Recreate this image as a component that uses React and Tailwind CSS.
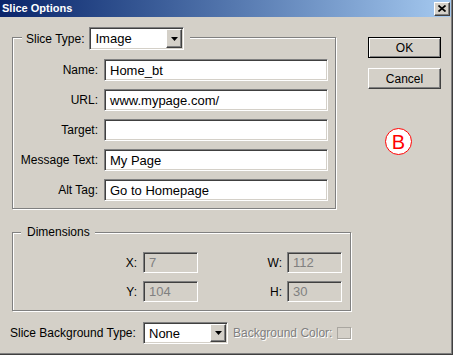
import React from "react";

const sunken =
  "border border-t-[#808080] border-l-[#808080] border-b-white border-r-white shadow-[inset_1px_1px_0_#404040,inset_-1px_-1px_0_#d4d0c8]";
const raised =
  "border border-t-white border-l-white border-b-[#404040] border-r-[#404040] shadow-[inset_-1px_-1px_0_#808080]";
const etched =
  "border border-[#808080] shadow-[inset_1px_1px_0_#fff,1px_1px_0_#fff]";

function Field({ value, disabled, className }) {
  return (
    <div
      className={`${sunken} ${className} flex items-center pl-[5px] text-[13px] leading-none ${
        disabled ? "bg-[#d4d0c8] text-[#808080]" : "bg-white text-black"
      }`}
    >
      {value}
    </div>
  );
}

function Select({ value, className }) {
  return (
    <div className={`${sunken} ${className} bg-white flex items-stretch p-[1px]`}>
      <div className="flex-1 flex items-center pl-[4px] text-[13px] leading-none text-black">
        {value}
      </div>
      <div className={`${raised} w-[16px] bg-[#d4d0c8] flex items-center justify-center`}>
        <svg width="7" height="4" viewBox="0 0 7 4">
          <path d="M0 0h7L3.5 4z" fill="#000" />
        </svg>
      </div>
    </div>
  );
}

function Label({ children }) {
  return (
    <div className="flex items-center justify-end text-[12px] leading-none text-black">
      {children}
    </div>
  );
}

export default function App() {
  return (
    <div className="w-[453px] h-[355px] bg-[#d4d0c8] overflow-hidden font-['Liberation_Sans',Arial,sans-serif] shadow-[inset_-1px_-1px_0_#404040,inset_-2px_-2px_0_#808080] flex flex-col">
      {/* Title bar */}
      <div className="h-[17px] mr-[2px] bg-gradient-to-r from-[#0a246a] to-[#a6caf0] flex items-center justify-between pl-[2px] pr-[1px]">
        <span className="text-white font-bold text-[11px] leading-none">Slice Options</span>
        <div className={`${raised} w-[16px] h-[14px] bg-[#d4d0c8] flex items-center justify-center`}>
          <svg width="8" height="7" viewBox="0 0 8 7">
            <path d="M0.5 0.5L7.5 6.5M7.5 0.5L0.5 6.5" stroke="#000" strokeWidth="1.7" />
          </svg>
        </div>
      </div>

      {/* Top row */}
      <div className="flex items-start pt-[20px]">
        <div className={`relative ml-[12px] w-[324px] h-[172px] ${etched} pt-[21px]`}>
          <div className="absolute left-[9px] top-[-11px] flex items-center gap-[5px] bg-[#d4d0c8] pl-[4px] pr-[6px]">
            <span className="text-[12px] leading-none text-black">Slice Type:</span>
            <Select value="Image" className="w-[95px] h-[23px]" />
          </div>
          <div className="grid grid-cols-[85px_224px] gap-x-[6px] gap-y-[8px]">
            <Label>Name:</Label>
            <Field value="Home_bt" className="h-[22px]" />
            <Label>URL:</Label>
            <Field value="www.mypage.com/" className="h-[22px]" />
            <Label>Target:</Label>
            <Field value="" className="h-[22px]" />
            <Label>Message Text:</Label>
            <Field value="My Page" className="h-[22px]" />
            <Label>Alt Tag:</Label>
            <Field value="Go to Homepage" className="h-[22px]" />
          </div>
        </div>

        <div className="ml-[32px] flex flex-col">
          <button className="w-[73px] h-[21px] border border-black bg-[#d4d0c8] shadow-[inset_1px_1px_0_#fff,inset_-1px_-1px_0_#808080] text-[12px] leading-none text-black flex items-center justify-center">
            OK
          </button>
          <button className={`${raised} mt-[10px] w-[73px] h-[21px] bg-[#d4d0c8] text-[12px] leading-none text-black flex items-center justify-center`}>
            Cancel
          </button>
          <div className="mt-[39px] ml-[17px] w-[27px] h-[27px] rounded-full border-[1.5px] border-[#ff0000] bg-white flex items-center justify-center text-[#ff0000] text-[20px] leading-none">
            B
          </div>
        </div>
      </div>

      {/* Dimensions */}
      <div className={`relative mt-[23px] ml-[12px] w-[339px] h-[79px] ${etched} pt-[19px]`}>
        <div className="absolute left-[8px] top-[-8px] bg-[#d4d0c8] pl-[6px] pr-[5px] h-[14px] flex items-center text-[12px] leading-none text-black">
          Dimensions
        </div>
        <div className="grid grid-cols-[130px_55px_89px_55px] gap-y-[8px]">
          <div className="flex items-center justify-end pr-[6px] text-[12px] leading-none text-black">X:</div>
          <Field value="7" disabled className="h-[21px] pl-[3px]" />
          <div className="flex items-center justify-end pr-[5px] text-[12px] leading-none text-black">W:</div>
          <Field value="112" disabled className="h-[21px] pl-[3px]" />
          <div className="flex items-center justify-end pr-[6px] text-[12px] leading-none text-black">Y:</div>
          <Field value="104" disabled className="h-[21px] pl-[3px]" />
          <div className="flex items-center justify-end pr-[5px] text-[12px] leading-none text-black">H:</div>
          <Field value="30" disabled className="h-[21px] pl-[3px]" />
        </div>
      </div>

      {/* Bottom row */}
      <div className="mt-[11px] pl-[10px] flex items-center">
        <span className="w-[133px] text-[12px] leading-none text-black">Slice Background Type:</span>
        <Select value="None" className="w-[85px] h-[22px]" />
        <span className="ml-[5px] text-[12px] leading-none text-[#808080] [text-shadow:1px_1px_0_#fff]">
          Background Color:
        </span>
        <div className="ml-[5px] w-[14px] h-[12px] border border-[#a9a6a0] shadow-[1px_1px_0_#fff]" />
      </div>
    </div>
  );
}
